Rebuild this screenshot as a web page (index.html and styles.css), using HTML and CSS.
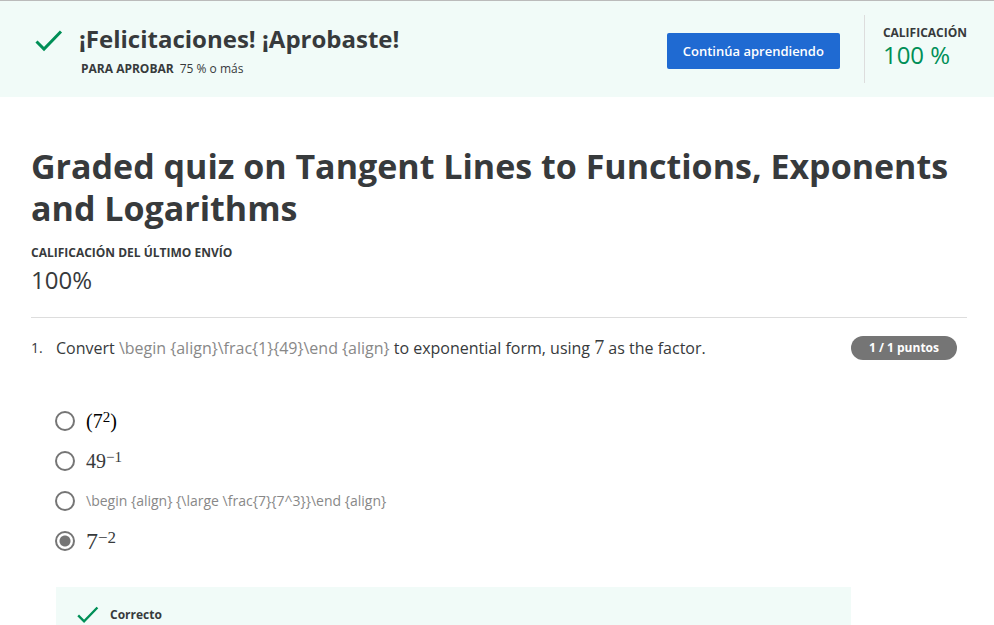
FILE: index.html
```html
<!DOCTYPE html>
<html lang="es">
<head>
<meta charset="utf-8">
<meta name="viewport" content="width=device-width, initial-scale=1">
<title>Graded quiz on Tangent Lines to Functions, Exponents and Logarithms</title>
<link rel="stylesheet" href="styles.css">
</head>
<body>
<header class="banner">
  <svg class="banner-check" viewBox="0 0 28 22" aria-hidden="true"><path d="M1.500 11.500 9 19 26 1.500"/></svg>
  <div class="banner-text">
    <h2 class="banner-title">¡Felicitaciones! ¡Aprobaste!</h2>
    <p class="banner-pass"><strong>PARA APROBAR</strong><span>75 % o más</span></p>
  </div>
  <button class="continue" type="button">Continúa aprendiendo</button>
  <div class="grade">
    <span class="grade-label">CALIFICACIÓN</span>
    <span class="grade-value">100 %</span>
  </div>
</header>
<main class="quiz">
  <h1 class="quiz-title">Graded quiz on Tangent Lines to Functions, Exponents and Logarithms</h1>
  <p class="label">CALIFICACIÓN DEL ÚLTIMO ENVÍO</p>
  <p class="score">100%</p>
  <section class="question">
    <span class="number">1.</span>
    <div class="question-body">
      <div class="prompt-row">
        <p class="prompt" id="prompt">Convert <span class="tex">\begin {align}\frac{1}{49}\end {align}</span> to exponential form, using <span class="math">7</span> as the factor.</p>
        <span class="points">1 / 1 puntos</span>
      </div>
      <div class="options" role="radiogroup" aria-labelledby="prompt">
        <label class="option"><input type="radio" name="answer"><span class="math black">(7<sup>2</sup>)</span></label>
        <label class="option"><input type="radio" name="answer"><span class="math">49<sup>−1</sup></span></label>
        <label class="option"><input type="radio" name="answer"><span class="tex small">\begin {align} {\large \frac{7}{7^3}}\end {align}</span></label>
        <label class="option"><input type="radio" name="answer" checked><span class="math large">7<sup>−2</sup></span></label>
      </div>
      <div class="feedback">
        <svg class="feedback-check" viewBox="0 0 28 22" aria-hidden="true"><path d="M1.500 11.500 9 19 26 1.500"/></svg>
        <strong>Correcto</strong>
      </div>
    </div>
  </section>
</main>
</body>
</html>
```

FILE: styles.css
```css
* {
  box-sizing: border-box;
}

body {
  margin: 0;
  background: #fff;
  color: #373a3c;
  font-family: "Open Sans", "Noto Sans", sans-serif;
  font-size: 16px;
  line-height: 24px;
}

h1, h2, p {
  margin: 0;
}

svg {
  flex: none;
  fill: none;
  stroke: #008f57;
  stroke-width: 3;
}

.banner {
  display: flex;
  align-items: center;
  padding: 14px 27px 14px 35px;
  border-top: 1px solid #bbb;
  background: #f1fbf8;
}

.banner-check {
  width: 28px;
  height: 22px;
  margin-bottom: 16px;
}

.banner-text {
  flex: 1;
  margin: 4px 16px 0;
}

.banner-title {
  font-size: 24px;
  line-height: 30px;
}

.banner-pass {
  display: flex;
  gap: 6px;
  margin-top: 5px;
  padding-left: 2px;
  font-size: 12px;
  line-height: 20px;
}

.continue {
  height: 36px;
  margin: 4px 24px 0 0;
  padding: 0 16px;
  border: 0;
  border-radius: 2px;
  background: #1f6ad2;
  color: #fff;
  font: 600 13px/20px "Open Sans", "Noto Sans", sans-serif;
}

.grade {
  display: flex;
  flex-direction: column;
  padding: 10px 0 14px 18px;
  border-left: 1px solid #ddd;
}

.label,
.grade-label {
  font-size: 12px;
  font-weight: 700;
  line-height: 20px;
}

.grade-label {
  line-height: 16px;
}

.grade-value {
  color: #008f57;
  font-size: 24px;
  line-height: 28px;
}

.quiz {
  padding: 48px 27px 0 31px;
}

.quiz-title {
  margin-bottom: 14px;
  font-size: 34px;
  line-height: 42px;
}

.score {
  padding: 1px 0 21px;
  border-bottom: 1px solid #ddd;
  font-size: 24px;
  line-height: 32px;
}

.question {
  display: flex;
  padding-top: 18px;
}

.number {
  flex: none;
  width: 25px;
  font-size: 14px;
  line-height: 24px;
}

.question-body {
  flex: 1;
}

.prompt-row {
  display: flex;
  justify-content: space-between;
  padding-right: 10px;
}

.tex {
  color: #888;
}

.small {
  font-size: 14px;
}

.math {
  font-family: "Liberation Serif", serif;
  font-size: 20px;
  line-height: 20px;
}

.math sup {
  font-size: 15px;
  line-height: 0;
  vertical-align: 6px;
}

.black {
  color: #000;
}

.large {
  font-size: 24px;
  line-height: 24px;
}

.large sup {
  font-size: 17px;
}

.points {
  padding: 0 18px;
  border-radius: 12px;
  background: #757575;
  color: #fff;
  font-size: 12px;
  font-weight: 700;
}

.options {
  display: flex;
  flex-direction: column;
  gap: 16px;
  margin: 49px 0 34px;
}

.option {
  display: flex;
  align-items: center;
  gap: 11px;
  min-height: 24px;
}

.option input {
  appearance: none;
  width: 20px;
  height: 20px;
  margin: 0 0 0 -1px;
  border: 2px solid #757575;
  border-radius: 50%;
}

.option input:checked {
  background: radial-gradient(circle, #757575 5px, transparent 6px);
}

.feedback {
  display: flex;
  align-items: center;
  gap: 11px;
  margin-right: 116px;
  padding: 18px 21px 0;
  background: #f1fbf8;
  font-size: 12px;
  line-height: 20px;
}

.feedback-check {
  width: 22px;
  height: 18px;
}
```
